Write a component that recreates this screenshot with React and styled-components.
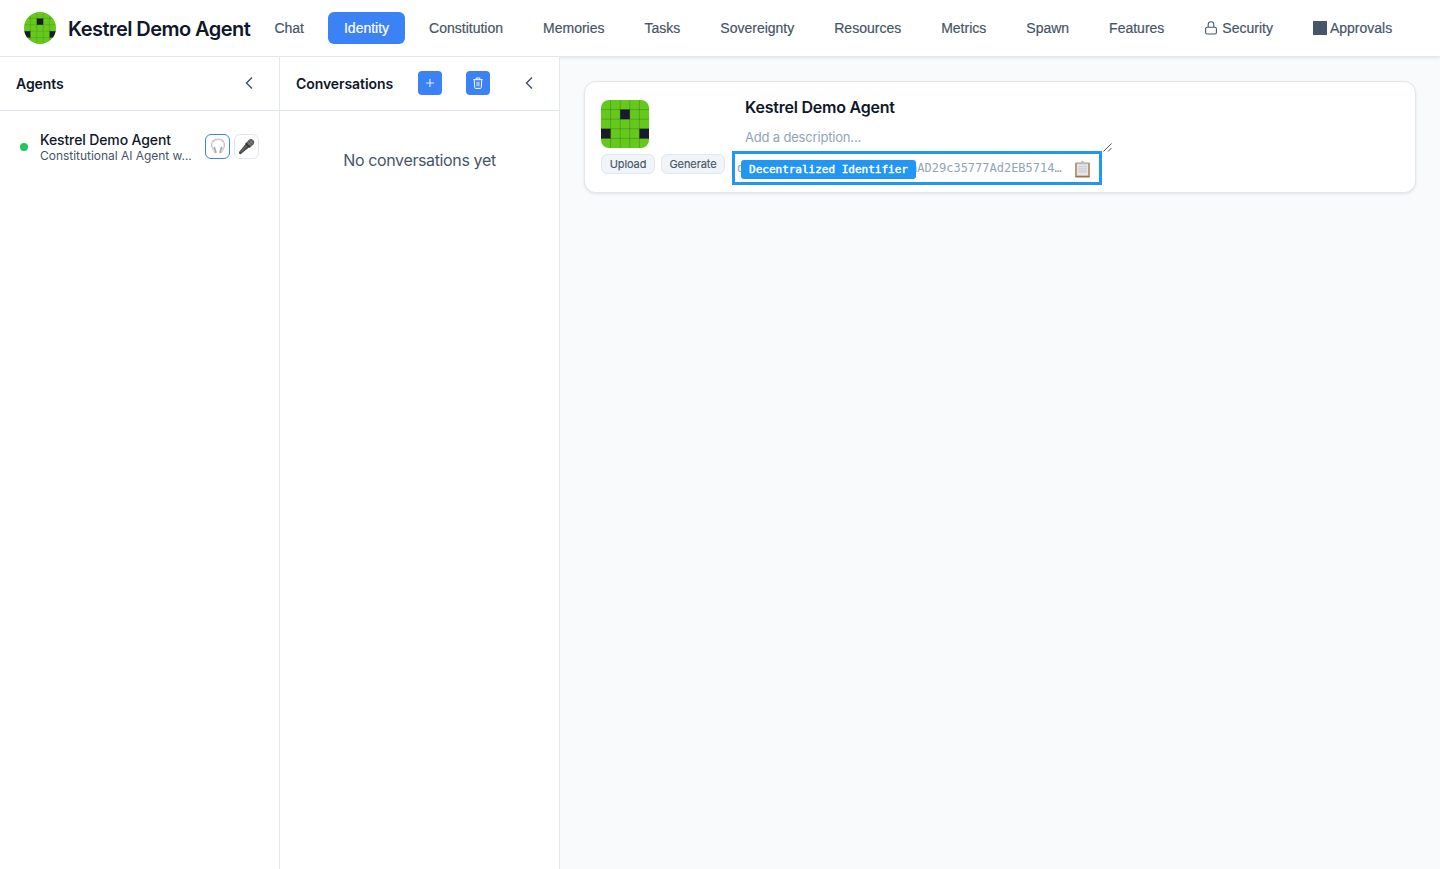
import React from "react";
import styled, { createGlobalStyle, css } from "styled-components";

const Global = createGlobalStyle`
  * { box-sizing: border-box; }
  body { margin: 0; background: #f8fafc; font-family: Inter, "Liberation Sans", sans-serif; color: #0f172a; }
  button { font: inherit; margin: 0; padding: 0; }
`;

const Page = styled.div`display: flex; flex-direction: column; height: 100vh; overflow: hidden;`;

const Header = styled.header`
  display: flex; align-items: center; flex: none; height: 57px; padding: 0 24px;
  background: #fff; border-bottom: 1px solid #e2e8f0;
  box-shadow: 0 1px 3px rgba(0, 0, 0, 0.1);
`;
const Brand = styled.div`display: flex; align-items: center; gap: 12px; width: 234.4px; flex: none;`;
const BrandName = styled.h1`
  margin: 0; padding-top: 1px; font-size: 20px; line-height: 24px; font-weight: 600;
  letter-spacing: -0.55px; white-space: nowrap;
`;
const Nav = styled.nav`display: flex; gap: 8px;`;
const Tab = styled.button`
  display: flex; align-items: center; height: 32px; padding: 0 16px; border: 0; border-radius: 6px;
  font: 14px/16px "Liberation Sans", Arial, sans-serif; white-space: nowrap;
  color: ${(p) => (p.$active ? "#fff" : "#475569")};
  background: ${(p) => (p.$active ? "#3b82f6" : "transparent")};
  -webkit-text-stroke: 0.2px currentColor;
  svg { margin-right: 4px; }
`;
const Square = styled.span`width: 14px; height: 14px; margin-right: 3px; background: #475569;`;

const Body = styled.div`display: flex; flex: 1; min-height: 0;`;
const Panel = styled.aside`width: 280px; flex: none; background: #fff; border-right: 1px solid #e2e8f0;`;
const PanelHead = styled.div`
  display: flex; align-items: center; height: 54px; padding: 0 16px; border-bottom: 1px solid #e2e8f0;
`;
const PanelTitle = styled.h2`
  margin: 0; width: ${(p) => p.$w}px; font-size: 14px; line-height: 20px; font-weight: 600;
  letter-spacing: ${(p) => p.$ls}px; white-space: nowrap;
`;
const Collapse = styled.button`
  display: flex; align-items: center; justify-content: center; width: 28px; height: 28px;
  margin: 0 0 2px auto; border: 0; background: none; color: #475569;
`;
const Action = styled.button`
  display: flex; align-items: center; justify-content: center; width: 24px; height: 24px;
  margin: 0 24px 2px 0; border: 0; border-radius: 4px; background: #3b82f6;
`;
const AgentRow = styled.div`display: flex; align-items: center; padding: 0 20px; height: 71px;`;
const Dot = styled.span`width: 8px; height: 8px; border-radius: 50%; background: #22c55e; margin: 1px 12px 0 0; flex: none;`;
const AgentText = styled.div`width: 165px; padding-top: 1px; flex: none; white-space: nowrap;`;
const AgentName = styled.div`font-size: 14px; line-height: 17px; font-weight: 500; letter-spacing: -0.12px;`;
const AgentDesc = styled.div`font-size: 12px; line-height: 15px; color: #475569; letter-spacing: -0.03px;`;
const IconButton = styled.button`
  display: flex; align-items: center; justify-content: center; width: 25px; height: 25px; margin-right: 4px;
  border: 1px solid ${(p) => (p.$active ? "#3b82f6" : "#e2e8f0")}; border-radius: 6px; background: #fff; flex: none;
`;
const Empty = styled.p`
  margin: 0; padding-top: 37px; text-align: center; font-size: 16px; line-height: 24px;
  color: #475569; letter-spacing: -0.37px;
`;

const Main = styled.main`flex: 1; padding: 24px;`;
const Card = styled.section`
  display: flex; height: 112px; padding: 18px 16px 0; background: #fff;
  border: 1px solid #e2e8f0; border-radius: 12px; box-shadow: 0 1px 3px rgba(0, 0, 0, 0.1);
`;
const AvatarColumn = styled.div`width: 131px; flex: none;`;
const ButtonRow = styled.div`display: flex; gap: 6px; margin-top: 6px;`;
const SmallButton = styled.button`
  width: ${(p) => p.$w}px; height: 20px; border: 1px solid #e2e8f0; border-radius: 6px; background: #f1f5f9;
  color: #475569; font-size: 11px; line-height: 18px; letter-spacing: -0.08px;
  -webkit-text-stroke: 0.15px currentColor;
`;
const Details = styled.div`display: flex; flex-direction: column; width: 380px; margin-top: -6px;`;
const Name = styled.h3`
  margin: 0; padding-left: 13px; height: 26px; font-size: 16px; line-height: 27px; font-weight: 600;
  letter-spacing: -0.22px;
`;
const Description = styled.div`
  display: flex; justify-content: space-between; align-items: flex-end; height: 31px; padding-left: 13px;
  span { align-self: flex-start; padding-top: 7px; font-size: 13px; line-height: 20px; color: #94a3b8; letter-spacing: -0.18px; }
  svg { position: relative; top: 1px; }
`;
const Identifier = styled.div`
  position: relative; display: flex; align-items: center; width: 370px; height: 34px; flex: none;
  border: 3px solid #2196f3; padding: 0 8px 0 2px; justify-content: space-between;
  svg { margin-top: 1px; }
`;
const mono = css`font-family: "DejaVu Sans Mono", monospace; white-space: nowrap;`;
const Did = styled.code`${mono} font-size: 12px; line-height: 16px; letter-spacing: -0.01px; color: #94a3b8;`;
const Label = styled.span`
  ${mono} position: absolute; left: 6px; top: 6px; width: 175px; height: 19px; border-radius: 3px;
  background: #2196f3; color: #fff; font-size: 11px; line-height: 19px; text-align: center;
  -webkit-text-stroke: 0.45px currentColor;
`;

const Round = styled.svg`display: block; flex: none; border-radius: ${(p) => p.$r};`;

function Avatar({ size, radius }) {
  return (
    <Round width={size} height={size} viewBox="0 0 50 50" $r={radius}>
      <rect width="50" height="50" fill="#65c91c" />
      <path d="M20 10h10v10H20zM0 30h10v10H0zM40 30h10v10H40z" fill="#1a1a2e" />
      <path d="M10 0v50M20 0v50M30 0v50M40 0v50M0 10h50M0 20h50M0 30h50M0 40h50" stroke="#1a1a2e" strokeOpacity=".22" strokeWidth="1" />
    </Round>
  );
}

const Chevron = () => (
  <svg width="10" height="14" viewBox="0 0 10 14" fill="none" stroke="currentColor" strokeWidth="1.5">
    <path d="M8 1.5 2.5 7 8 12.5" />
  </svg>
);

const Lock = () => (
  <svg width="14" height="14" viewBox="0 0 14 14" fill="none" stroke="currentColor" strokeWidth="1.1">
    <rect x="1.6" y="6.2" width="10.8" height="6.8" rx="1.5" />
    <path d="M4.2 6V3.6a2.8 2.8 0 0 1 5.6 0V6" />
  </svg>
);

const Plus = () => (
  <svg width="12" height="12" viewBox="0 0 12 12" stroke="#fff" strokeOpacity=".85" strokeWidth="1.1">
    <path d="M6 2v8M2 6h8" />
  </svg>
);

const Trash = () => (
  <svg width="12" height="12" viewBox="0 0 12 12" fill="none" stroke="#fff" strokeWidth="1">
    <path d="M1.2 2.7h9.6M4.2 2.5V1h3.6v1.5M2.3 3.2l.4 7.3q.1.9 1 .9h4.6q.9 0 1-.9l.4-7.3" />
    <path d="M4.3 4.8h3.4v4.5H4.3z" fill="#fff" fillOpacity=".5" stroke="none" />
  </svg>
);

const Headphones = () => (
  <svg width="16" height="17" viewBox="0 0 16 17" fill="none" strokeLinecap="round">
    <path d="M3.2 11.500C-.5 5.800 3 1.300 8 1.300S16.500 5.800 12.800 11.500" stroke="#c2c2c2" strokeWidth="1.4" />
    <path d="M3.200 11C1 5.800 3.500 2 8 2s7 3.800 4.800 9" stroke="#eee" strokeWidth=".8" />
    <path d="M4.400 9.800l1.300 4.400M11.600 9.800l-1.300 4.400" stroke="#aaa" strokeWidth="2" />
    <path d="M3.200 10.200l1.200 4M12.800 10.200l-1.200 4" stroke="#d8d8d8" strokeWidth="1.500" />
  </svg>
);

const Microphone = () => (
  <svg width="17" height="17" viewBox="0 0 17 17" fill="none">
    <path d="M1 13.900 8 5.500l3.500 3.500-8.600 7q-.8.500-1.500-.2-.8-.900-.4-1.900z" fill="#484848" />
    <path d="m3 13.700 5.800-6" stroke="#8a8a8a" strokeWidth=".9" />
    <path d="M7.700 5.200 10.700 2q2.300-2 4.500.1 2.100 2.200.1 4.500L12 9.500z" fill="#5a5a5a" />
    <path d="m9.700 4 3.700 3.700M11.500 2.300l3.500 3.500M10.300 6.900l4.600-4.600" stroke="#999" strokeWidth=".7" />
    <path d="m7.700 5.200 4.200 4.200" stroke="#2a2a2a" strokeWidth="1.200" />
  </svg>
);

const Clipboard = () => (
  <svg width="17" height="18" viewBox="0 0 17 18">
    <rect x="1" y="2.400" width="15" height="15" rx="1" fill="#b99a78" />
    <path d="M1.500 16.700h14" stroke="#8f6b48" />
    <rect x="3" y="3.800" width="11" height="11.700" fill="#e4e6e9" />
    <path d="M4.200 6.500h8.600M4.200 8.300h8.600M4.200 10.100h8.600M4.200 11.900h8.600" stroke="#cbced3" strokeWidth="1.100" />
    <path d="M4.500 4.200V2.700h2.300Q7 .8 8.500.8t1.700 1.900h2.300v1.500z" fill="#b3bfc3" />
  </svg>
);

const Grip = () => (
  <svg width="9" height="9" viewBox="0 0 9 9" stroke="#555" strokeWidth="1">
    <path d="M.5 8.500l8-8M5 8.500l3.500-3.500" />
  </svg>
);

const tabs = ["Chat", "Identity", "Constitution", "Memories", "Tasks", "Sovereignty", "Resources", "Metrics", "Spawn", "Features"];

export default function App() {
  return (
    <Page>
      <Global />
      <Header>
        <Brand>
          <Avatar size={32} radius="50%" />
          <BrandName>Kestrel Demo Agent</BrandName>
        </Brand>
        <Nav>
          {tabs.map((t) => <Tab key={t} $active={t === "Identity"}>{t}</Tab>)}
          <Tab><Lock />Security</Tab>
          <Tab><Square />Approvals</Tab>
        </Nav>
      </Header>
      <Body>
        <Panel>
          <PanelHead>
            <PanelTitle $w={120} $ls={-0.08}>Agents</PanelTitle>
            <Collapse><Chevron /></Collapse>
          </PanelHead>
          <AgentRow>
            <Dot />
            <AgentText>
              <AgentName>Kestrel Demo Agent</AgentName>
              <AgentDesc>Constitutional AI Agent w...</AgentDesc>
            </AgentText>
            <IconButton $active><Headphones /></IconButton>
            <IconButton><Microphone /></IconButton>
          </AgentRow>
        </Panel>
        <Panel>
          <PanelHead>
            <PanelTitle $w={122} $ls={-0.08}>Conversations</PanelTitle>
            <Action><Plus /></Action>
            <Action><Trash /></Action>
            <Collapse><Chevron /></Collapse>
          </PanelHead>
          <Empty>No conversations yet</Empty>
        </Panel>
        <Main>
          <Card>
            <AvatarColumn>
              <Avatar size={48} radius="8px" />
              <ButtonRow>
                <SmallButton $w={54}>Upload</SmallButton>
                <SmallButton $w={64}>Generate</SmallButton>
              </ButtonRow>
            </AvatarColumn>
            <Details>
              <Name>Kestrel Demo Agent</Name>
              <Description><span>Add a description...</span><Grip /></Description>
              <Identifier>
                <Did>did:kestrel:demo:0x41F8caAD29c35777Ad2EB5714…</Did>
                <Clipboard />
                <Label>Decentralized Identifier</Label>
              </Identifier>
            </Details>
          </Card>
        </Main>
      </Body>
    </Page>
  );
}
